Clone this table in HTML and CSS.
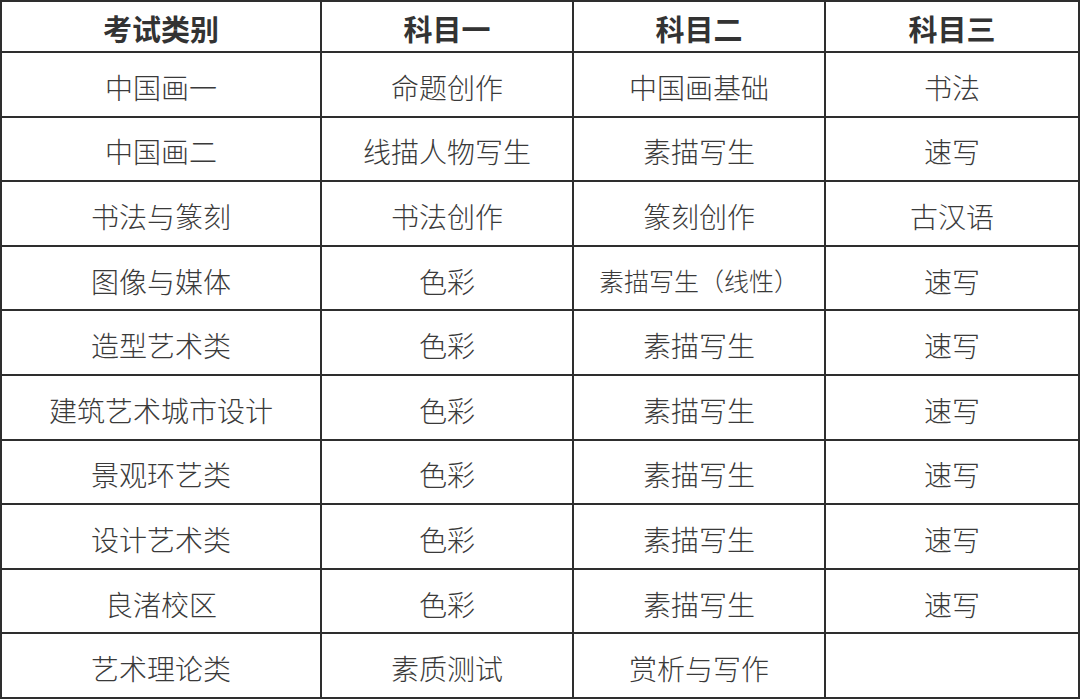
FILE: index.html
```html
<!DOCTYPE html>
<html lang="zh">
<head>
<meta charset="utf-8">
<link rel="stylesheet" href="styles.css">
</head>
<body>
<div class="exam" role="table">
  <div class="cell head" role="columnheader">考试类别</div>
  <div class="cell head" role="columnheader">科目一</div>
  <div class="cell head" role="columnheader">科目二</div>
  <div class="cell head" role="columnheader">科目三</div>

  <div class="cell">中国画一</div><div class="cell">命题创作</div><div class="cell">中国画基础</div><div class="cell">书法</div>
  <div class="cell">中国画二</div><div class="cell">线描人物写生</div><div class="cell">素描写生</div><div class="cell">速写</div>
  <div class="cell">书法与篆刻</div><div class="cell">书法创作</div><div class="cell">篆刻创作</div><div class="cell">古汉语</div>
  <div class="cell">图像与媒体</div><div class="cell">色彩</div><div class="cell small">素描写生（线性）</div><div class="cell">速写</div>
  <div class="cell">造型艺术类</div><div class="cell">色彩</div><div class="cell">素描写生</div><div class="cell">速写</div>
  <div class="cell">建筑艺术城市设计</div><div class="cell">色彩</div><div class="cell">素描写生</div><div class="cell">速写</div>
  <div class="cell">景观环艺类</div><div class="cell">色彩</div><div class="cell">素描写生</div><div class="cell">速写</div>
  <div class="cell">设计艺术类</div><div class="cell">色彩</div><div class="cell">素描写生</div><div class="cell">速写</div>
  <div class="cell">良渚校区</div><div class="cell">色彩</div><div class="cell">素描写生</div><div class="cell">速写</div>
  <div class="cell">艺术理论类</div><div class="cell">素质测试</div><div class="cell">赏析与写作</div><div class="cell"></div>
</div>
</body>
</html>
```

FILE: styles.css
```css
html, body {
  margin: 0;
  padding: 0;
  background: #ffffff;
}

body {
  width: 1080px;
  height: 699px;
  overflow: hidden;
  font-family: "Noto Sans CJK SC", "Noto Sans", sans-serif;
  color: #3a3a3a;
}

.exam {
  box-sizing: border-box;
  width: 1080px;
  height: 699px;
  display: grid;
  grid-template-columns: 320px 252px 252px 1fr;
  grid-template-rows: 51px repeat(10, 1fr);
  border-top: 2px solid #2e2e2e;
  border-left: 2px solid #2e2e2e;
}

.cell {
  box-sizing: border-box;
  border-right: 2px solid #2e2e2e;
  border-bottom: 2px solid #2e2e2e;
  display: flex;
  align-items: center;
  justify-content: center;
  font-size: 28px;
  font-weight: 300;
  line-height: 1;
  padding-top: 5px;
  white-space: nowrap;
}

.cell.head {
  font-size: 29px;
  font-weight: 700;
  color: #333333;
  padding-top: 3px;
}

.cell.small {
  font-size: 25px;
}
```
